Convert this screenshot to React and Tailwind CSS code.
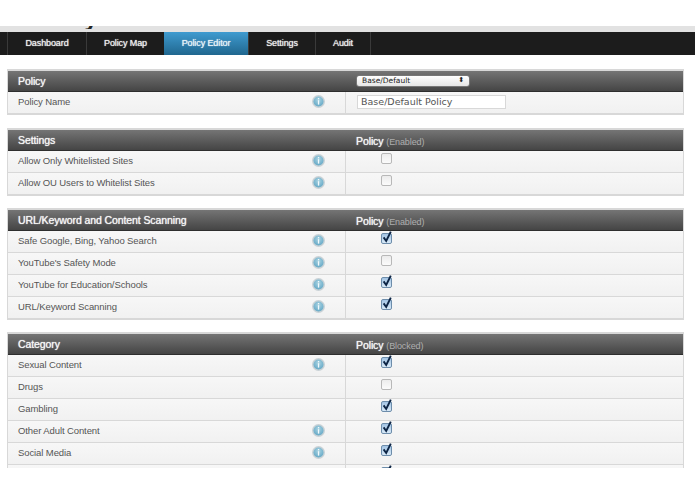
const sans = "font-['Liberation_Sans',Arial,sans-serif]";

function Info() {
  return (
    <svg width="13" height="13" viewBox="0 0 13 13" className="block">
      <defs>
        <radialGradient id="infoBlue" cx="50%" cy="35%" r="70%">
          <stop offset="0%" stopColor="#a9d3e2" />
          <stop offset="100%" stopColor="#5fa5c4" />
        </radialGradient>
      </defs>
      <circle cx="6.5" cy="6.5" r="6.5" fill="#c9d2d6" />
      <circle cx="6.5" cy="6.5" r="5" fill="url(#infoBlue)" />
      <rect x="5.9" y="3" width="1.3" height="1.3" fill="#f2fafc" />
      <rect x="5.9" y="5.2" width="1.3" height="4.4" fill="#f2fafc" />
    </svg>
  );
}

function Check({ on }) {
  if (!on) {
    return <div className="w-[11px] h-[11px] rounded-[2px] border border-[#b8b8b8] bg-gradient-to-b from-[#ececec] to-[#fbfbfb]" />;
  }
  return (
    <div className="relative w-[11px] h-[11px] rounded-[2px] border border-[#6d8dab] bg-gradient-to-b from-[#a3c4e4] to-[#d8e9f7]">
      <svg width="12" height="14" viewBox="0 0 12 14" className="absolute left-[-1px] top-[-4px]">
        <path d="M2.6 7.4 L5.2 11 L9.8 1.6" fill="none" stroke="#0d2545" strokeWidth="1.9" />
      </svg>
    </div>
  );
}

function Row({ label, info, on, children, first }) {
  return (
    <div className={`flex ${first ? "h-[21px]" : "h-[22px] border-t border-[#d8d8d8]"} bg-gradient-to-b from-[#f7f7f7] to-[#f1f1f1]`}>
      <div className="w-[337px] flex items-center pl-[10px] pb-[1px] text-[9.5px] leading-none tracking-[-0.1px] text-[#555]">
        <span className="flex-1">{label}</span>
        {info && <span className="mr-[20px] -mt-[1px]"><Info /></span>}
      </div>
      <div className="flex-1 border-l border-[#d8d8d8] pl-[35px] pt-[2px]">
        {children || <Check on={on} />}
      </div>
    </div>
  );
}

const headText = "text-[10.5px] leading-none tracking-[-0.1px] text-[#f6f6f6] [text-shadow:0_0_1px_#ffffff]";

function Head({ title, right }) {
  return (
    <div className="flex items-center h-[21px] bg-gradient-to-b from-[#757575] to-[#454545] border-b border-[#2e2e2e]">
      <div className={`w-[338px] pl-[10px] ${headText}`}>{title}</div>
      <div className="pl-[10px] pb-[1px] leading-none">{right}</div>
    </div>
  );
}

function Status({ word }) {
  return (
    <span className={headText}>
      Policy <span className="text-[9px] text-[#aeaeae] [text-shadow:none]">({word})</span>
    </span>
  );
}

function Panel({ title, right, children, gap }) {
  return (
    <section className={`ml-[7px] w-[677px] border-x border-y-2 border-[#d8d8d8] ${gap}`}>
      <Head title={title} right={right} />
      {children}
    </section>
  );
}

const tabs = [
  ["Dashboard", "w-[79px]"],
  ["Policy Map", "w-[78px]"],
  ["Policy Editor", "w-[84px]", true],
  ["Settings", "w-[67px]"],
  ["Audit", "w-[55px]"],
];

export default function App() {
  return (
    <div className={`w-[695px] h-[494px] bg-white overflow-hidden ${sans}`}>
      <div className="h-[468px] overflow-hidden">
        <div className="h-[26px]" />
        <div className="relative h-[6px] bg-[#e2e2e2]">
          <div className="absolute left-[27px] top-0 h-[3px] overflow-hidden text-[24px] leading-[26px] font-bold text-[#222]">
            <div className="-mt-[21px]">Policy</div>
          </div>
        </div>
        <nav className="flex h-[23px] bg-[#1c1c1c] border-l-[7px] border-[#1c1c1c]">
          {tabs.map(([t, w, active]) => (
            <div
              key={t}
              className={`${w} flex items-center justify-center text-[9px] tracking-[-0.1px] [text-shadow:0_0_1px_#ffffff] border-l border-[#3a3a3a] ${
                active ? "bg-gradient-to-b from-[#3f9bd0] to-[#20678f] text-[#e8f2f8] border-l-0" : "text-[#ededed]"
              }`}
            >
              {t}
            </div>
          ))}
          <div className="border-l border-[#3a3a3a]" />
        </nav>
        <div className="h-[14px]" />

        <Panel
          gap="mb-[13px]"
          title="Policy"
          right={
            <div className="w-[114px] h-[12px] rounded-[3px] bg-gradient-to-b from-white to-[#e6e6e6] border border-[#777] flex items-center justify-between px-[5px] text-[7.5px] font-['DejaVu_Sans',sans-serif] text-[#222]">
              <span>Base/Default</span>
              <span className="text-[7px] leading-none">⬍</span>
            </div>
          }
        >
          <Row label="Policy Name" info first>
            <div className="-ml-[24px] mt-[1px] w-[149px] h-[14px] bg-white border border-[#d8d8d8] pl-[3px] text-[9.5px] leading-[12px] font-['DejaVu_Sans',sans-serif] text-[#555]">
              Base/Default Policy
            </div>
          </Row>
        </Panel>

        <Panel gap="mb-[12px]" title="Settings" right={<Status word="Enabled" />}>
          <Row label="Allow Only Whitelisted Sites" info on={false} first />
          <Row label="Allow OU Users to Whitelist Sites" info on={false} />
        </Panel>

        <Panel gap="mb-[12px]" title="URL/Keyword and Content Scanning" right={<Status word="Enabled" />}>
          <Row label="Safe Google, Bing, Yahoo Search" info on first />
          <Row label="YouTube's Safety Mode" info on={false} />
          <Row label="YouTube for Education/Schools" info on />
          <Row label="URL/Keyword Scanning" info on />
        </Panel>

        <Panel gap="" title="Category" right={<Status word="Blocked" />}>
          <Row label="Sexual Content" info on first />
          <Row label="Drugs" on={false} />
          <Row label="Gambling" on />
          <Row label="Other Adult Content" info on />
          <Row label="Social Media" info on />
          <Row label="" info on />
        </Panel>
      </div>
    </div>
  );
}
